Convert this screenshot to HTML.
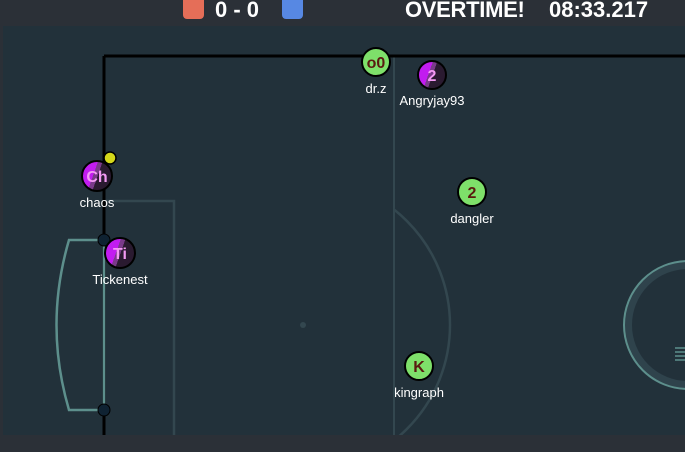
<html><body style="margin:0;width:685px;height:452px;background:#2b3037;overflow:hidden;position:relative;font-family:'Liberation Sans',sans-serif">
<div style="position:absolute;left:183px;top:-4px;width:21px;height:23px;background:#e56e58;border-radius:4px"></div>
<div style="position:absolute;left:282px;top:-4px;width:21px;height:23px;background:#5788e3;border-radius:4px"></div>
<div style="position:absolute;left:215px;top:-3px;color:#fff;font-weight:bold;font-size:22px">0 - 0</div>
<div style="position:absolute;left:405px;top:-3px;color:#fff;font-weight:bold;font-size:22px;letter-spacing:-0.3px">OVERTIME!</div>
<div style="position:absolute;left:549px;top:-3px;color:#fff;font-weight:bold;font-size:22px">08:33.217</div>
<svg width="685" height="452" style="position:absolute;left:0;top:0">
<defs><clipPath id="c"><rect x="394" y="26" width="300" height="409"/></clipPath>
<linearGradient id="p" x1="0" y1="0" x2="1" y2="0.35"><stop offset="0.48" stop-color="#c21cf0"/><stop offset="0.48" stop-color="#7a3a8a"/><stop offset="0.62" stop-color="#7a3a8a"/><stop offset="0.62" stop-color="#2a1a30"/></linearGradient></defs>
<rect x="3" y="26" width="682" height="409" fill="#22313a"/>
<line x1="394" y1="56" x2="394" y2="435" stroke="#33474f" stroke-width="2"/>
<circle cx="303" cy="325" r="147" fill="none" stroke="#33474f" stroke-width="2.5" clip-path="url(#c)"/>
<circle cx="303" cy="325" r="3" fill="#33474f"/>
<circle cx="688" cy="325" r="60" fill="none" stroke="#2f434c" stroke-width="8"/>
<circle cx="688" cy="325" r="64" fill="none" stroke="#5d8f8c" stroke-width="2"/>
<path d="M675 348h10M675 352h10M675 356h10M675 360h10" stroke="#5d8f8c" stroke-width="1.5"/>
<path d="M104 201H174V435" fill="none" stroke="#33474f" stroke-width="2.5"/>
<path d="M104 56H685M104 56V435" fill="none" stroke="#000" stroke-width="3"/>
<path d="M104 240H69Q44 325 69 410H104Z" fill="none" stroke="#5d8f8c" stroke-width="2.5"/>
<circle cx="104" cy="240" r="6" fill="#0f2232" stroke="#000"/>
<circle cx="104" cy="410" r="6" fill="#0f2232" stroke="#000"/>
<circle cx="110" cy="158" r="6" fill="#d4d81a" stroke="#000" stroke-width="1.5"/>
<g font-weight="bold" font-size="16" text-anchor="middle">
<circle cx="376" cy="62" r="14" fill="#7ee06a" stroke="#000" stroke-width="2"/><text x="376" y="68" fill="#5a1a10">o0</text>
<circle cx="432" cy="75" r="14" fill="url(#p)" stroke="#000" stroke-width="2"/><text x="432" y="81" fill="#f49af4">2</text>
<circle cx="97" cy="176" r="15" fill="url(#p)" stroke="#000" stroke-width="2"/><text x="97" y="182" fill="#f49af4">Ch</text>
<circle cx="120" cy="253" r="15" fill="url(#p)" stroke="#000" stroke-width="2"/><text x="120" y="259" fill="#f49af4">Ti</text>
<circle cx="472" cy="192" r="14" fill="#7ee06a" stroke="#000" stroke-width="2"/><text x="472" y="198" fill="#5a1a10">2</text>
<circle cx="419" cy="366" r="14" fill="#7ee06a" stroke="#000" stroke-width="2"/><text x="419" y="372" fill="#5a1a10">K</text>
</g>
<g font-size="13" fill="#fff" text-anchor="middle">
<text x="376" y="93">dr.z</text><text x="432" y="105">Angryjay93</text>
<text x="97" y="207">chaos</text><text x="120" y="284">Tickenest</text>
<text x="472" y="223">dangler</text><text x="419" y="397">kingraph</text>
</g>
</svg>
</body></html>
